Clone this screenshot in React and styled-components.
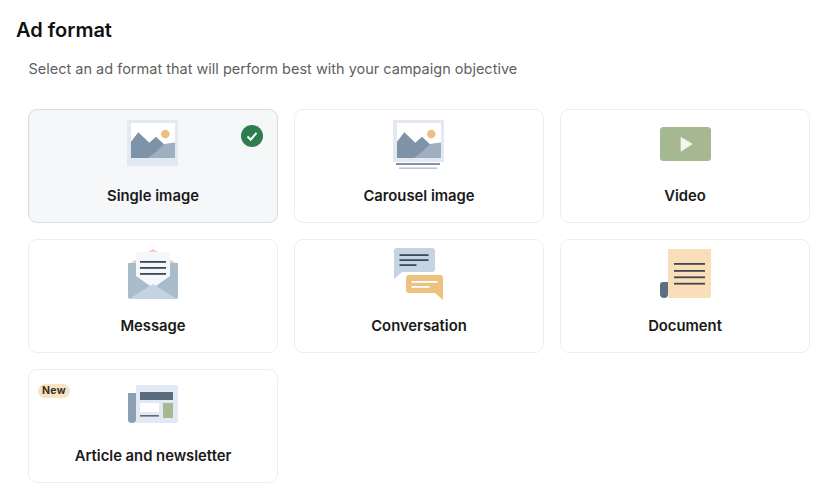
import React from 'react';
import styled, { createGlobalStyle } from 'styled-components';

const GlobalStyle = createGlobalStyle`
  body {
    margin: 0;
    background: #fff;
    font-family: Inter, "Liberation Sans", sans-serif;
  }
`;

const Page = styled.div`
  padding: 18px 29px 0 16px;
`;

const Title = styled.h1`
  margin: 0;
  font-size: 20px;
  line-height: 24px;
  font-weight: 600;
  color: #111;
`;

const Subtitle = styled.p`
  margin: 16px 0 0 12.5px;
  font-size: 14.5px;
  line-height: 22px;
  color: #5f5f5f;
`;

const Grid = styled.div`
  display: grid;
  grid-template-columns: repeat(3, 250px);
  grid-auto-rows: 114px;
  gap: 16px;
  margin: 29px 0 0 12px;
`;

const Card = styled.div`
  position: relative;
  box-sizing: border-box;
  display: flex;
  flex-direction: column;
  align-items: center;
  padding-top: 8px;
  border: 1px solid ${p => (p.$selected ? '#d6dbe0' : '#eeeeee')};
  border-radius: 9px;
  background: ${p => (p.$selected ? '#f5f7f9' : '#fff')};
`;

const IconBox = styled.svg`
  display: block;
  width: 60px;
  height: 52px;
`;

const Label = styled.div`
  margin-top: 16px;
  font-size: 14.8px;
  line-height: 20px;
  font-weight: 600;
  color: #1a1a1a;
`;

const Check = styled.svg`
  position: absolute;
  top: 15px;
  right: 14px;
  width: 22px;
  height: 22px;
`;

const Badge = styled.span`
  position: absolute;
  top: 14px;
  left: 9px;
  padding: 0 4px;
  border-radius: 8px;
  background: #f8e3c4;
  font-size: 10.5px;
  line-height: 14px;
  font-weight: 700;
  letter-spacing: 0.3px;
  color: #3a3226;
`;

const Picture = ({ height, lines }) => (
  <IconBox viewBox="0 0 60 52">
    <rect x="4" y="2" width="51" height={height} fill="#e2e9f2" />
    <rect x="8" y="5" width="44" height="35" fill="#fff" />
    <circle cx="42.3" cy="16" r="4.3" fill="#eec07f" />
    <path d="M8 40V23.7L15.3 14.3 26.3 24.7 33 18.7 41 26.3V40Z" fill="#7f93a8" />
    <path d="M25 40L33 34 41 26 48 25 52 24.5V40Z" fill="#a0afc0" />
    {lines}
  </IconBox>
);

const SingleIcon = () => <Picture height={46} />;

const CarouselIcon = () => (
  <Picture
    height={42}
    lines={
      <>
        <rect x="7" y="45" width="44" height="2" fill="#8a8fa8" />
        <rect x="10" y="49.4" width="38" height="1.6" fill="#b9c3d9" />
      </>
    }
  />
);

const VideoIcon = () => (
  <IconBox viewBox="0 0 60 52">
    <rect x="5" y="9" width="51" height="34" rx="3.5" fill="#a5b891" />
    <path d="M25.7 18.7V33.7L37.7 26Z" fill="#f5f5e8" />
  </IconBox>
);

const MessageIcon = () => (
  <IconBox viewBox="0 0 60 52">
    <path d="M6 16L30 1 54 16V30H6Z" fill="#f6c9b8" />
    <path d="M5 15H55V49Q55 51 53 51H7Q5 51 5 49Z" fill="#a9bccb" />
    <path d="M13 4H47V28L30 40 13 28Z" fill="#f4f7fb" />
    <path d="M6 51L30 36 54 51Z" fill="#c5d3e0" />
    <rect x="17" y="13" width="26" height="1.8" fill="#3d4650" />
    <rect x="17" y="19" width="26" height="1.8" fill="#3d4650" />
    <rect x="17" y="25" width="26" height="1.8" fill="#3d4650" />
  </IconBox>
);

const ConversationIcon = () => (
  <IconBox viewBox="0 0 60 52">
    <path d="M8 0H43Q46 0 46 3V21Q46 24 43 24H13L5 31V3Q5 0 8 0Z" fill="#c5d3e2" />
    <rect x="10.5" y="6.2" width="29" height="1.8" fill="#3d4a5a" />
    <rect x="10.5" y="11.2" width="29" height="1.8" fill="#3d4a5a" />
    <rect x="10.5" y="16.2" width="17" height="1.8" fill="#3d4a5a" />
    <path d="M20 27H51Q54 27 54 30V52L46 45H20Q17 45 17 42V30Q17 27 20 27Z" fill="#ecc27e" />
    <rect x="22.5" y="33" width="26" height="1.8" fill="#fff" />
    <rect x="22.5" y="38" width="18" height="1.8" fill="#fff" />
  </IconBox>
);

const DocumentIcon = () => (
  <IconBox viewBox="0 0 60 52">
    <path d="M13 1H56V48Q56 50 54 50H13Z" fill="#f8dfb9" />
    <path d="M5 37Q5 34 8 34H13V46Q13 50 9 50Q5 50 5 46Z" fill="#5a6f82" />
    <rect x="19" y="15" width="31" height="1.8" fill="#44474d" />
    <rect x="19" y="22" width="31" height="1.8" fill="#44474d" />
    <rect x="19" y="28.4" width="31" height="1.8" fill="#44474d" />
    <rect x="19" y="34.8" width="31" height="1.8" fill="#44474d" />
  </IconBox>
);

const ArticleIcon = () => (
  <IconBox viewBox="0 0 60 52">
    <path d="M13 7H53Q55 7 55 9V43Q55 45 53 45H13Z" fill="#e2e9f2" />
    <path d="M5 15H13V42Q13 45 9 45Q5 45 5 42Z" fill="#8ca0b3" />
    <rect x="17" y="14" width="33" height="8" fill="#5a6b7d" />
    <rect x="17" y="25" width="19" height="9" fill="#fff" />
    <rect x="17" y="37" width="19" height="1.6" fill="#5a6b7d" />
    <rect x="40" y="25" width="10" height="15" fill="#a5b891" />
  </IconBox>
);

const formats = [
  { name: 'Single image', Icon: SingleIcon, selected: true },
  { name: 'Carousel image', Icon: CarouselIcon },
  { name: 'Video', Icon: VideoIcon },
  { name: 'Message', Icon: MessageIcon },
  { name: 'Conversation', Icon: ConversationIcon },
  { name: 'Document', Icon: DocumentIcon },
  { name: 'Article and newsletter', Icon: ArticleIcon, isNew: true },
];

const App = () => {
  return (
    <Page>
      <GlobalStyle />
      <Title>Ad format</Title>
      <Subtitle>Select an ad format that will perform best with your campaign objective</Subtitle>
      <Grid>
        {formats.map(({ name, Icon, selected, isNew }) => (
          <Card key={name} $selected={selected}>
            <Icon />
            <Label>{name}</Label>
            {selected && (
              <Check viewBox="0 0 22 22">
                <circle cx="11" cy="11" r="11" fill="#2f7d4f" />
                <path d="M6.5 11.5L9.7 14.7 15.5 7.8" fill="none" stroke="#fff" strokeWidth="2" />
              </Check>
            )}
            {isNew && <Badge>New</Badge>}
          </Card>
        ))}
      </Grid>
    </Page>
  );
};

export default App;
